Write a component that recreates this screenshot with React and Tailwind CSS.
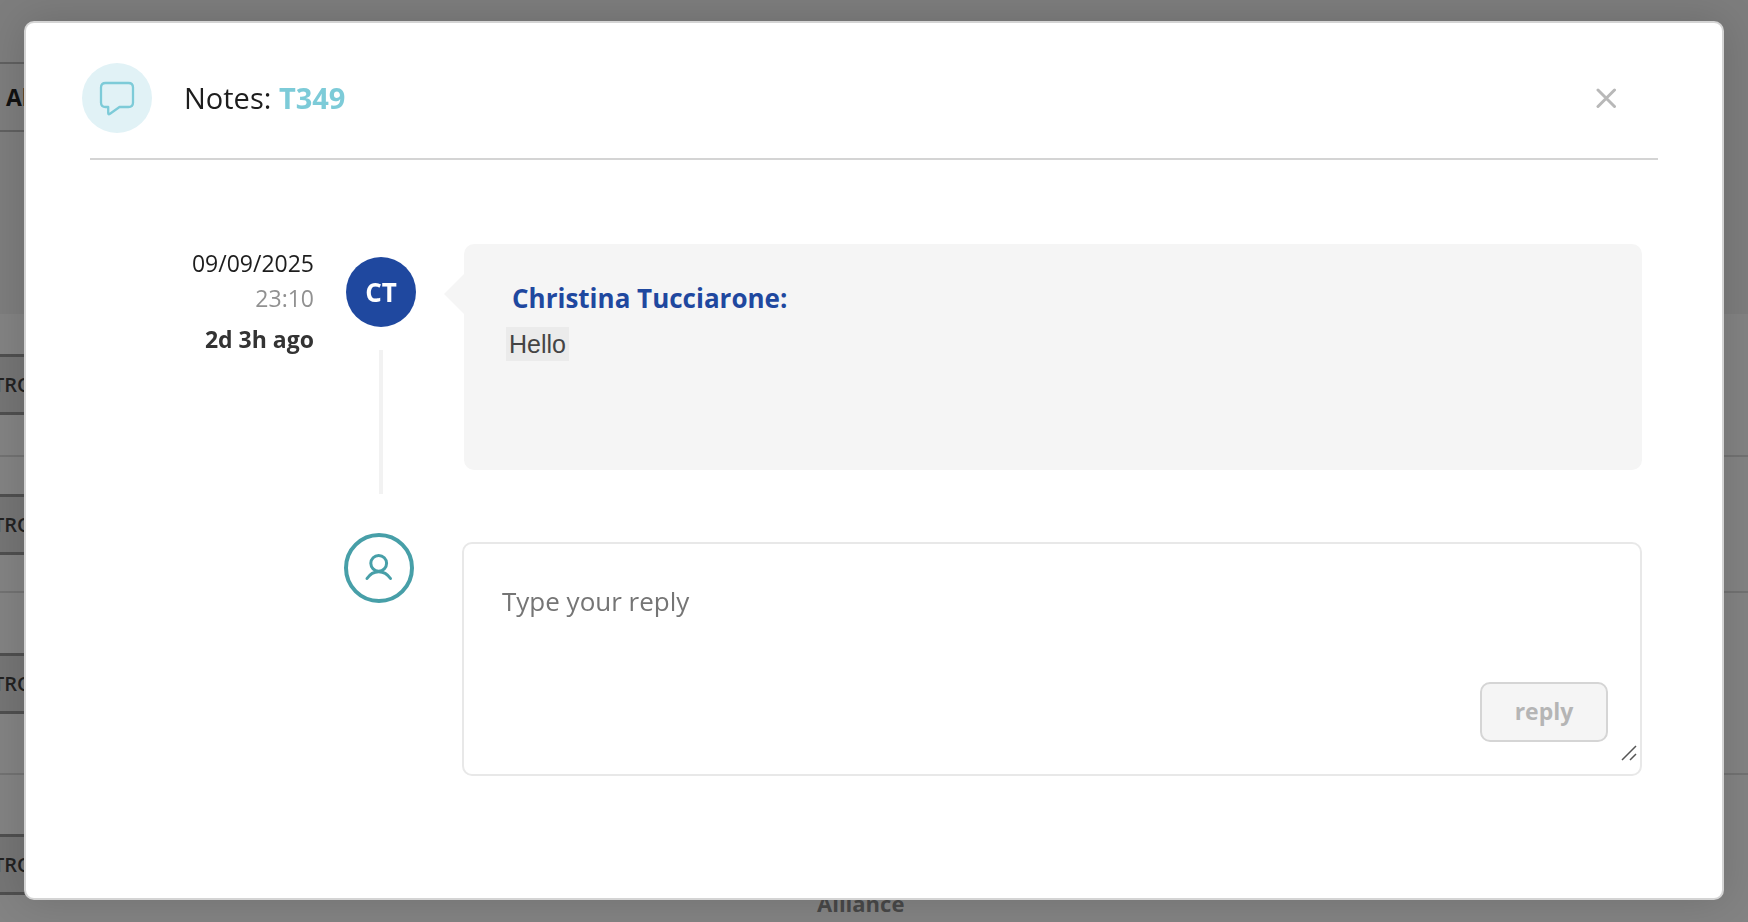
const rows = [
  { id: 1, height: 'h-[143px]', pad: 'pt-[40px]' },
  { id: 2, height: 'h-[136px]', pad: 'pt-[37px]' },
  { id: 3, height: 'h-[182px]', pad: 'pt-[60px]' },
  { id: 4, height: 'h-[182px]', pad: 'pt-[59px]' },
];

function PageBehind() {
  return (
    <div aria-hidden="true" className="h-screen overflow-hidden bg-[#838383] text-[#222]">
      <div className="h-[314px] bg-[#7d7d7d] pt-[62px]">
        <div className="flex h-[70px] w-[400px] items-center border-y-2 border-[#606060] pl-[6px] text-[23px] font-bold text-[#111]">
          All
        </div>
      </div>
      {rows.map((row) => (
        <div key={row.id} className={`border-b-2 border-[#727272] ${row.height} ${row.pad}`}>
          <div className="flex h-[61px] w-[300px] items-center border-y-[3px] border-[#4f4f4f] bg-[#757575] text-[20px] font-semibold">
            <span className="-ml-[7px]">TROY</span>
          </div>
          {row.id === 4 && (
            <div className="-mt-[8px] pl-[817px] text-[22px] leading-[32px] font-bold text-[#484848]">Alliance</div>
          )}
        </div>
      ))}
    </div>
  );
}

function NoteIcon() {
  return (
    <svg viewBox="0 0 36 36" className="size-9" fill="none" stroke="#7dcbd8" strokeWidth="2.3" strokeLinejoin="round" aria-hidden="true">
      <path d="M6.500 3H29.500Q34 3 34 7.500V22.500Q34 27 29.500 27H20.500L11 33.800Q9.200 35 9.200 33V27H6.500Q2 27 2 22.500V7.500Q2 3 6.500 3Z" />
    </svg>
  );
}

function UserIcon() {
  return (
    <svg viewBox="0 0 30 30" className="size-[30px]" fill="none" stroke="#479fa8" strokeWidth="3" strokeLinecap="round" aria-hidden="true">
      <circle cx="14.700" cy="10.300" r="7.900" />
      <path d="M3 25.500Q7.500 18.700 14.700 18.700T26.500 25.500" />
    </svg>
  );
}

export default function App() {
  return (
    <div className="font-['Open_Sans','Noto_Sans',sans-serif]">
      <PageBehind />
      <div className="fixed inset-0 px-6 pt-[21px] pb-[22px]">
        <div
          role="dialog"
          aria-modal="true"
          aria-labelledby="notes-title"
          className="h-full overflow-hidden rounded-[10px] border-2 border-[#d4d4d4] bg-white px-[56px] pt-[40px] shadow-[0_0_40px_rgba(0,0,0,0.15)]"
        >
          <header className="flex items-center pb-[25px]">
            <div className="flex size-[70px] items-center justify-center rounded-full bg-[#e1f2f6]">
              <NoteIcon />
            </div>
            <h1 id="notes-title" className="ml-8 text-[29px] leading-[40px] text-[#1d1d1d]">
              Notes: <span className="font-bold text-[#7dcbd8]">T349</span>
            </h1>
            <button type="button" aria-label="Close" className="mr-[42px] ml-auto p-2">
              <svg viewBox="0 0 20 20" className="size-5" stroke="#b8b8b8" strokeWidth="3" strokeLinecap="round" aria-hidden="true">
                <path d="M2 2L18.500 18.500M18.500 2L2 18.500" />
              </svg>
            </button>
          </header>
          <hr className="mx-[8px] border-t-2 border-[#d4d4d4]" />

          <main className="pt-[84px] pr-[24px]">
            <article className="flex">
              <div className="w-[232px] shrink-0 text-right text-[23px] text-[#1d1d1d]">
                <div className="leading-[38px]">09/09/2025</div>
                <div className="leading-[32px] text-[#919191]">23:10</div>
                <div className="mt-[6px] leading-[38px] font-bold text-[#333]">2d 3h ago</div>
              </div>
              <div className="ml-8 flex w-[70px] shrink-0 flex-col items-center pt-[13px]">
                <div className="flex size-[70px] items-center justify-center rounded-full bg-[#1f489f] text-[26px] font-bold text-white">CT</div>
                <div className="mt-[23px] h-[144px] w-1 bg-[#f2f2f2]" />
              </div>
              <div className="relative ml-[48px] h-[226px] grow rounded-[10px] bg-[#f5f5f5] px-[42px] pt-[35px]">
                <svg viewBox="0 0 20 40" className="absolute top-[30px] -left-5 h-10 w-5" fill="#f5f5f5" aria-hidden="true">
                  <path d="M20 0L0 20L20 40Z" />
                </svg>
                <h2 className="pl-[6px] text-[26px] leading-[38px] font-bold text-[#1f489f]">Christina Tucciarone:</h2>
                <p className="mt-[10px] flex font-['Liberation_Sans',Arial,sans-serif] text-[25px] leading-[34px] text-[#444]">
                  <span className="bg-[#ebebeb] px-[3px]">Hello</span>
                </p>
              </div>
            </article>

            <form className="mt-[39px] flex pl-[262px]" onSubmit={(e) => e.preventDefault()}>
              <div className="flex size-[70px] shrink-0 items-center justify-center rounded-full border-4 border-[#479fa8]">
                <UserIcon />
              </div>
              <div className="mt-[9px] ml-[48px] flex h-[234px] grow flex-col rounded-[10px] border-2 border-[#e8e8e8]">
                <textarea
                  aria-label="Type your reply"
                  placeholder="Type your reply"
                  className="min-h-0 grow resize-none px-[38px] pt-[38px] text-[26px] leading-[38px] outline-none placeholder:text-[#757575]"
                />
                <div className="flex justify-end pr-[32px]">
                  <button type="submit" disabled className="h-[60px] w-[128px] rounded-[10px] border-2 border-[#d5d5d5] bg-[#f5f5f5] pb-[2px] text-[23px] font-bold text-[#b5b5b5]">
                    reply
                  </button>
                </div>
                <div className="flex h-[32px] justify-end pt-[3px] pr-[3px]">
                  <svg viewBox="0 0 16 16" className="size-4" stroke="#555" strokeWidth="1.500" aria-hidden="true">
                    <path d="M1 15L15 1M9 15L15 9" />
                  </svg>
                </div>
              </div>
            </form>
          </main>
        </div>
      </div>
    </div>
  );
}
